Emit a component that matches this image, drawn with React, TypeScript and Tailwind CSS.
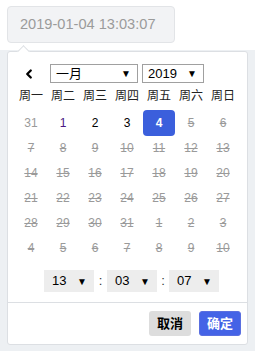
import { ChevronLeft } from 'lucide-react';

const weekDays = ['周一', '周二', '周三', '周四', '周五', '周六', '周日'];

type Day = { n: number; kind: 'other' | 'normal' | 'visited' | 'selected' | 'off' };

// 6 rows of the month grid, Jan 2019 starting Monday Dec 31
const days: Day[] = [
    { n: 31, kind: 'other' },
    { n: 1, kind: 'visited' },
    { n: 2, kind: 'normal' },
    { n: 3, kind: 'normal' },
    { n: 4, kind: 'selected' },
    ...Array.from({ length: 27 }, (_, i) => ({ n: i + 5, kind: 'off' as const })),
    ...Array.from({ length: 10 }, (_, i) => ({ n: i + 1, kind: 'off' as const })),
];

function Select({ value, className }: { value: string; className: string }) {
    return (
        <div className={`flex items-center justify-between border border-[#a0a0a0] bg-white h-[19px] pl-[5px] pr-[6px] text-[13px] text-black ${className}`}>
            <span>{value}</span>
            <span className="text-[10px]">▼</span>
        </div>
    );
}

function TimeSelect({ value }: { value: string }) {
    return (
        <div className="flex items-center justify-between bg-[#ededed] w-[50px] h-[22px] pl-[8px] pr-[7px] text-[13px] text-black">
            <span>{value}</span>
            <span className="text-[10px]">▼</span>
        </div>
    );
}

export default function App() {
    return (
        <div className="w-[255px] h-[351px] flex flex-col bg-white font-['Liberation_Sans','Noto_Sans_CJK_SC',sans-serif] overflow-hidden">
            {/* Input */}
            <div className="h-[50px] pt-[6px] pl-[7px]">
                <div className="w-[168px] h-[37px] flex items-center pl-[12px] rounded-[4px] border border-[#e2e4e7] bg-[#f2f3f5] text-[14.6px] text-[#9b9b9b]">
                    2019-01-04 13:03:07
                </div>
            </div>

            {/* Popup area */}
            <div className="flex-1 bg-[#edf0f3] pl-[7px] pt-[1px]">
                <div className="relative w-[241px] h-[294px] bg-white border border-[#dcdfe3] rounded-[3px] flex flex-col">
                    <div className="absolute left-[11px] -top-[5px] w-[9px] h-[9px] rotate-45 bg-white border-l border-t border-[#dcdfe3]" />

                    {/* Header */}
                    <div className="flex items-center mt-[12px] pl-[14px]">
                        <ChevronLeft className="w-[14px] h-[14px] text-black" strokeWidth={4} />
                        <Select value="一月" className="w-[88px] ml-[14px]" />
                        <Select value="2019" className="w-[62px] ml-[4px]" />
                    </div>

                    {/* Week days */}
                    <div className="grid grid-cols-7 w-[224px] ml-[7px] mt-[4px] h-[18px] items-center text-[12px] text-[#222]">
                        {weekDays.map((d) => (
                            <div key={d} className="text-center">{d}</div>
                        ))}
                    </div>

                    {/* Days */}
                    <div className="grid grid-cols-7 w-[224px] ml-[7px] mt-[5px] text-[12px]">
                        {days.map((d, i) => (
                            <div key={i} className="h-[25px] flex items-center justify-center">
                                {d.kind === 'selected' ? (
                                    <div className="w-[32px] h-[26px] rounded-[4px] bg-[#3b5fdc] text-white font-bold flex items-center justify-center">
                                        {d.n}
                                    </div>
                                ) : (
                                    <span
                                        className={
                                            d.kind === 'other'
                                                ? 'text-[#9a9a9a]'
                                                : d.kind === 'visited'
                                                    ? 'text-[#4b1784]'
                                                    : d.kind === 'normal'
                                                        ? 'text-black'
                                                        : 'text-[#9a9a9a] line-through'
                                        }
                                    >
                                        {d.n}
                                    </span>
                                )}
                            </div>
                        ))}
                    </div>

                    {/* Time */}
                    <div className="flex items-center mt-[10px] pl-[36px] text-[13px] text-[#333]">
                        <TimeSelect value="13" />
                        <span className="w-[13px] text-center">:</span>
                        <TimeSelect value="03" />
                        <span className="w-[12px] text-center">:</span>
                        <TimeSelect value="07" />
                    </div>

                    {/* Footer */}
                    <div className="mt-[10px] border-t border-[#dcdfe3] flex justify-end gap-[8px] pt-[8px] pr-[6px]">
                        <button className="w-[42px] h-[25px] rounded-[3px] bg-[#dddddd] text-black text-[13px] font-bold">取消</button>
                        <button className="w-[42px] h-[25px] rounded-[3px] bg-[#4463e6] border border-[#5a6fe0] text-white text-[13px] font-bold">确定</button>
                    </div>
                </div>
            </div>
        </div>
    );
}
